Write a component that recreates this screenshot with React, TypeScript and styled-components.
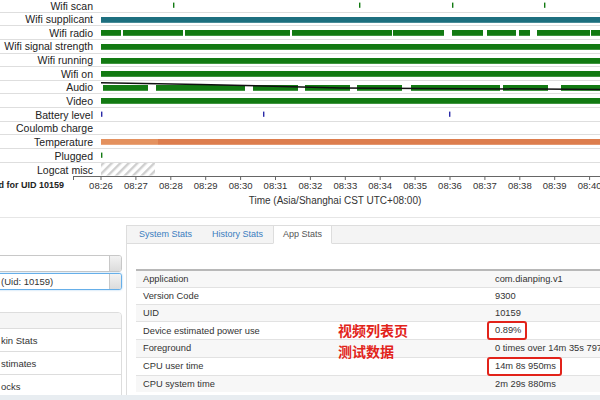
import styled, { createGlobalStyle } from "styled-components";

const GlobalStyle = createGlobalStyle`
  html, body { margin: 0; padding: 0; background: #fff; }
  body {
    width: 600px;
    height: 400px;
    overflow: hidden;
    font-family: "Liberation Sans", Arial, sans-serif;
    color: #333;
  }
`;

const GREEN = "#127a12";
const TEAL = "#1d6f7f";
const BLUE = "#2a2aa8";
const ORANGE = "#dd7d4d";
const ORANGE_LIGHT = "#e4915e";

const PLOT_X = 97;
const PLOT_W = 503;

type Seg = { from: number; to: number; color?: string };
type ChartRow = {
  label: string;
  color?: string;
  bars?: Seg[];
  ticks?: number[];
  hatch?: [number, number];
  trend?: boolean;
};

const full = (): Seg[] => [{ from: 101, to: 600 }];
const segs = (list: [number, number][]): Seg[] => list.map(([from, to]) => ({ from, to }));

const ROWS: ChartRow[] = [
  { label: "Wifi scan", color: GREEN, ticks: [173, 359, 452, 544] },
  { label: "Wifi supplicant", color: TEAL, bars: full() },
  {
    label: "Wifi radio",
    color: GREEN,
    bars: segs([[101, 121], [123, 183], [185, 290], [292, 392], [393, 444], [452, 483], [487, 516], [519, 530], [537, 590], [591, 600]]),
  },
  { label: "Wifi signal strength", color: GREEN, bars: full() },
  { label: "Wifi running", color: GREEN, bars: full() },
  { label: "Wifi on", color: GREEN, bars: full() },
  {
    label: "Audio",
    color: GREEN,
    trend: true,
    bars: segs([[103, 148], [156, 245], [253, 298], [305, 350], [357, 402], [411, 500], [503, 548], [561, 600]]),
  },
  { label: "Video", color: GREEN, bars: full() },
  { label: "Battery level", color: BLUE, ticks: [101, 263, 449] },
  { label: "Coulomb charge" },
  {
    label: "Temperature",
    bars: [
      { from: 101, to: 158, color: ORANGE_LIGHT },
      { from: 158, to: 600, color: ORANGE },
    ],
  },
  { label: "Plugged", color: GREEN, ticks: [101] },
  { label: "Logcat misc", hatch: [101, 155] },
];

const MINUTES = Array.from({ length: 15 }, (_, i) => 26 + i);
const minuteX = (m: number) => 101 + (m - 26) * 34.9;

const STATS: { name: string; value: string; mark?: boolean }[] = [
  { name: "Application", value: "com.dianping.v1" },
  { name: "Version Code", value: "9300" },
  { name: "UID", value: "10159" },
  { name: "Device estimated power use", value: "0.89%", mark: true },
  { name: "Foreground", value: "0 times over 14m 35s 797ms" },
  { name: "CPU user time", value: "14m 8s 950ms", mark: true },
  { name: "CPU system time", value: "2m 29s 880ms" },
];

const Page = styled.div`
  width: 600px;
  height: 400px;
  overflow: hidden;
  display: flex;
  flex-direction: column;
`;

const TopSection = styled.div`
  border-bottom: 1px solid #e6e6e6;
  padding-bottom: 10px;
`;

const Chart = styled.div`
  margin-top: -1px;
`;

const Row = styled.div`
  display: grid;
  grid-template-columns: ${PLOT_X}px ${PLOT_W}px;
  height: 13.65px;
  box-sizing: border-box;
  border-bottom: 1px solid #dedede;
  &:last-child { border-bottom: none; }
`;

const Label = styled.div`
  display: flex;
  justify-content: flex-end;
  align-items: center;
  padding-right: 4px;
  font-size: 10.5px;
  color: #222;
  white-space: nowrap;
  min-width: 0;
`;

const Plot = styled.svg`
  display: block;
  overflow: visible;
`;

const AxisRow = styled.div`
  display: grid;
  grid-template-columns: 70px 530px;
  height: 18px;
`;

const ChartTitle = styled.div`
  display: flex;
  justify-content: flex-end;
  align-items: center;
  padding-right: 6px;
  font-size: 9px;
  font-weight: 700;
  color: #222;
  white-space: nowrap;
  min-width: 0;
`;

const Caption = styled.div`
  padding-left: 70px;
  text-align: center;
  font-size: 10px;
  line-height: 13px;
  color: #333;
`;

const Bottom = styled.div`
  display: grid;
  grid-template-columns: 122px 1fr;
  gap: 4px;
  height: 177px;
  padding-top: 7px;
  box-sizing: border-box;
`;

const Side = styled.div`
  margin-left: -6px;
  padding-top: 30px;
  display: flex;
  flex-direction: column;
`;

const Select = styled.div<{ $focus?: boolean }>`
  display: flex;
  height: 17px;
  box-sizing: border-box;
  border: 1px solid ${(p) => (p.$focus ? "#66afe9" : "#c8c8c8")};
  box-shadow: ${(p) => (p.$focus ? "0 0 2px rgba(102,175,233,0.7)" : "none")};
  border-radius: 3px;
  background: #fff;
  margin-bottom: 1px;
  overflow: hidden;
`;

const SelectText = styled.div`
  flex: 1;
  padding-left: 6px;
  font-size: 9.5px;
  line-height: 15px;
  color: #333;
  white-space: nowrap;
`;

const SelectBtn = styled.div`
  width: 11px;
  border-left: 1px solid #c8c8c8;
  background: linear-gradient(#f2f2f2, #dcdcdc);
`;

const Panel = styled.div`
  margin-top: 21px;
  border: 1px solid #ddd;
  border-radius: 4px;
  overflow: hidden;
`;

const PanelHead = styled.div`
  height: 15px;
  background: #f5f5f5;
  border-bottom: 1px solid #ddd;
`;

const PanelItem = styled.div`
  height: 23px;
  box-sizing: border-box;
  border-bottom: 1px solid #ddd;
  padding-left: 6px;
  display: flex;
  align-items: center;
  font-size: 9.5px;
  color: #333;
  white-space: nowrap;
  &:last-child { border-bottom: none; }
`;

const TabPanel = styled.div`
  border-left: 1px solid #ddd;
  border-top: 1px solid #ddd;
  display: flex;
  flex-direction: column;
  min-width: 0;
`;

const TabBar = styled.div`
  display: flex;
  height: 17px;
  padding-left: 2px;
  background: #f4f4f4;
  border-bottom: 1px solid #ddd;
`;

const Tab = styled.div<{ $active?: boolean }>`
  padding: 0 9px;
  margin-bottom: -1px;
  font-size: 9px;
  line-height: 17px;
  white-space: nowrap;
  color: ${(p) => (p.$active ? "#555" : "#3a7dbf")};
  background: ${(p) => (p.$active ? "#fff" : "transparent")};
  border: 1px solid ${(p) => (p.$active ? "#ddd" : "transparent")};
  border-bottom-color: ${(p) => (p.$active ? "#fff" : "transparent")};
  border-top: none;
`;

const TabBody = styled.div`
  padding: 25px 0 0 9px;
`;

const TableWrap = styled.div`
  position: relative;
  width: 520px;
`;

const Table = styled.table`
  width: 100%;
  border-collapse: collapse;
  border-top: 2px solid #b8b8b8;
  font-size: 9.3px;
  color: #333;
`;

const Tr = styled.tr`
  height: 17.2px;
  &:nth-child(odd) { background: #f7f7f7; }
  & + & td { border-top: 1px solid #e2e2e2; }
`;

const Td = styled.td<{ $w?: number }>`
  width: ${(p) => (p.$w ? `${p.$w}px` : "auto")};
  padding: 0 0 0 7px;
  white-space: nowrap;
  vertical-align: middle;
`;

const Marked = styled.span`
  display: inline-block;
  margin: -1px 0 -1px -8px;
  padding: 1px 4px 1px 6px;
  border: 2px solid #e2231a;
  border-radius: 3px;
  line-height: 13px;
`;

const Note = styled.div`
  position: absolute;
  left: 202px;
  top: 51px;
  font-family: "Noto Sans CJK SC", sans-serif;
  font-size: 14px;
  font-weight: 700;
  line-height: 20.5px;
  color: #e2231a;
  white-space: nowrap;
`;

const Footer = styled.div`
  flex: 1;
  background: #e8edf1;
`;

function PlotRow({ row }: { row: ChartRow }) {
  return (
    <Plot width={PLOT_W} height={13} viewBox={`${PLOT_X} 0 ${PLOT_W} 13`}>
      {row.hatch && (
        <>
          <defs>
            <pattern id="hatch" width="6" height="6" patternUnits="userSpaceOnUse" patternTransform="rotate(45)">
              <rect width="2.4" height="6" fill="#cfcfcf" />
            </pattern>
          </defs>
          <rect x={row.hatch[0]} y={0} width={row.hatch[1] - row.hatch[0]} height={12.5} fill="url(#hatch)" />
        </>
      )}
      {row.bars?.map((b, i) => (
        <rect key={i} x={b.from} y={4} width={b.to - b.from} height={5.8} fill={b.color ?? row.color} />
      ))}
      {row.ticks?.map((x) => (
        <rect key={x} x={x} y={3.6} width={1.4} height={5.2} fill={row.color} />
      ))}
      {row.trend && (
        <polyline points="101,1.8 200,3.4 340,6.9 600,8.4" fill="none" stroke="#111" strokeWidth={1.5} />
      )}
    </Plot>
  );
}

export default function App() {
  return (
    <>
      <GlobalStyle />
      <Page>
        <TopSection>
          <Chart>
            {ROWS.map((row) => (
              <Row key={row.label}>
                <Label>{row.label}</Label>
                <PlotRow row={row} />
              </Row>
            ))}
          </Chart>
          <AxisRow>
            <ChartTitle>Highlighted for UID 10159</ChartTitle>
            <svg width={530} height={18} viewBox="70 0 530 18">
              <line x1={73} x2={600} y1={0.5} y2={0.5} stroke="#666" strokeWidth={1} />
              <line x1={73.5} x2={73.5} y1={0} y2={4} stroke="#666" strokeWidth={1} />
              {MINUTES.map((m) => (
                <g key={m}>
                  <line x1={minuteX(m)} x2={minuteX(m)} y1={0} y2={4} stroke="#666" strokeWidth={1} />
                  <text
                    x={minuteX(m)}
                    y={13}
                    textAnchor="middle"
                    fontSize={9.5}
                    fill="#333"
                    fontFamily='"Liberation Sans", Arial, sans-serif'
                  >
                    08:{m}
                  </text>
                </g>
              ))}
            </svg>
          </AxisRow>
          <Caption>Time (Asia/Shanghai CST UTC+08:00)</Caption>
        </TopSection>

        <Bottom>
          <Side>
            <Select>
              <SelectText />
              <SelectBtn />
            </Select>
            <Select $focus>
              <SelectText>(Uid: 10159)</SelectText>
              <SelectBtn />
            </Select>
            <Panel>
              <PanelHead />
              <PanelItem>kin Stats</PanelItem>
              <PanelItem>stimates</PanelItem>
              <PanelItem>ocks</PanelItem>
            </Panel>
          </Side>

          <TabPanel>
            <TabBar>
              <Tab>System Stats</Tab>
              <Tab>History Stats</Tab>
              <Tab $active>App Stats</Tab>
            </TabBar>
            <TabBody>
              <TableWrap>
                <Table>
                  <tbody>
                    {STATS.map((s) => (
                      <Tr key={s.name}>
                        <Td $w={345}>{s.name}</Td>
                        <Td>{s.mark ? <Marked>{s.value}</Marked> : s.value}</Td>
                      </Tr>
                    ))}
                  </tbody>
                </Table>
                <Note>
                  视频列表页
                  <br />
                  测试数据
                </Note>
              </TableWrap>
            </TabBody>
          </TabPanel>
        </Bottom>
        <Footer />
      </Page>
    </>
  );
}
